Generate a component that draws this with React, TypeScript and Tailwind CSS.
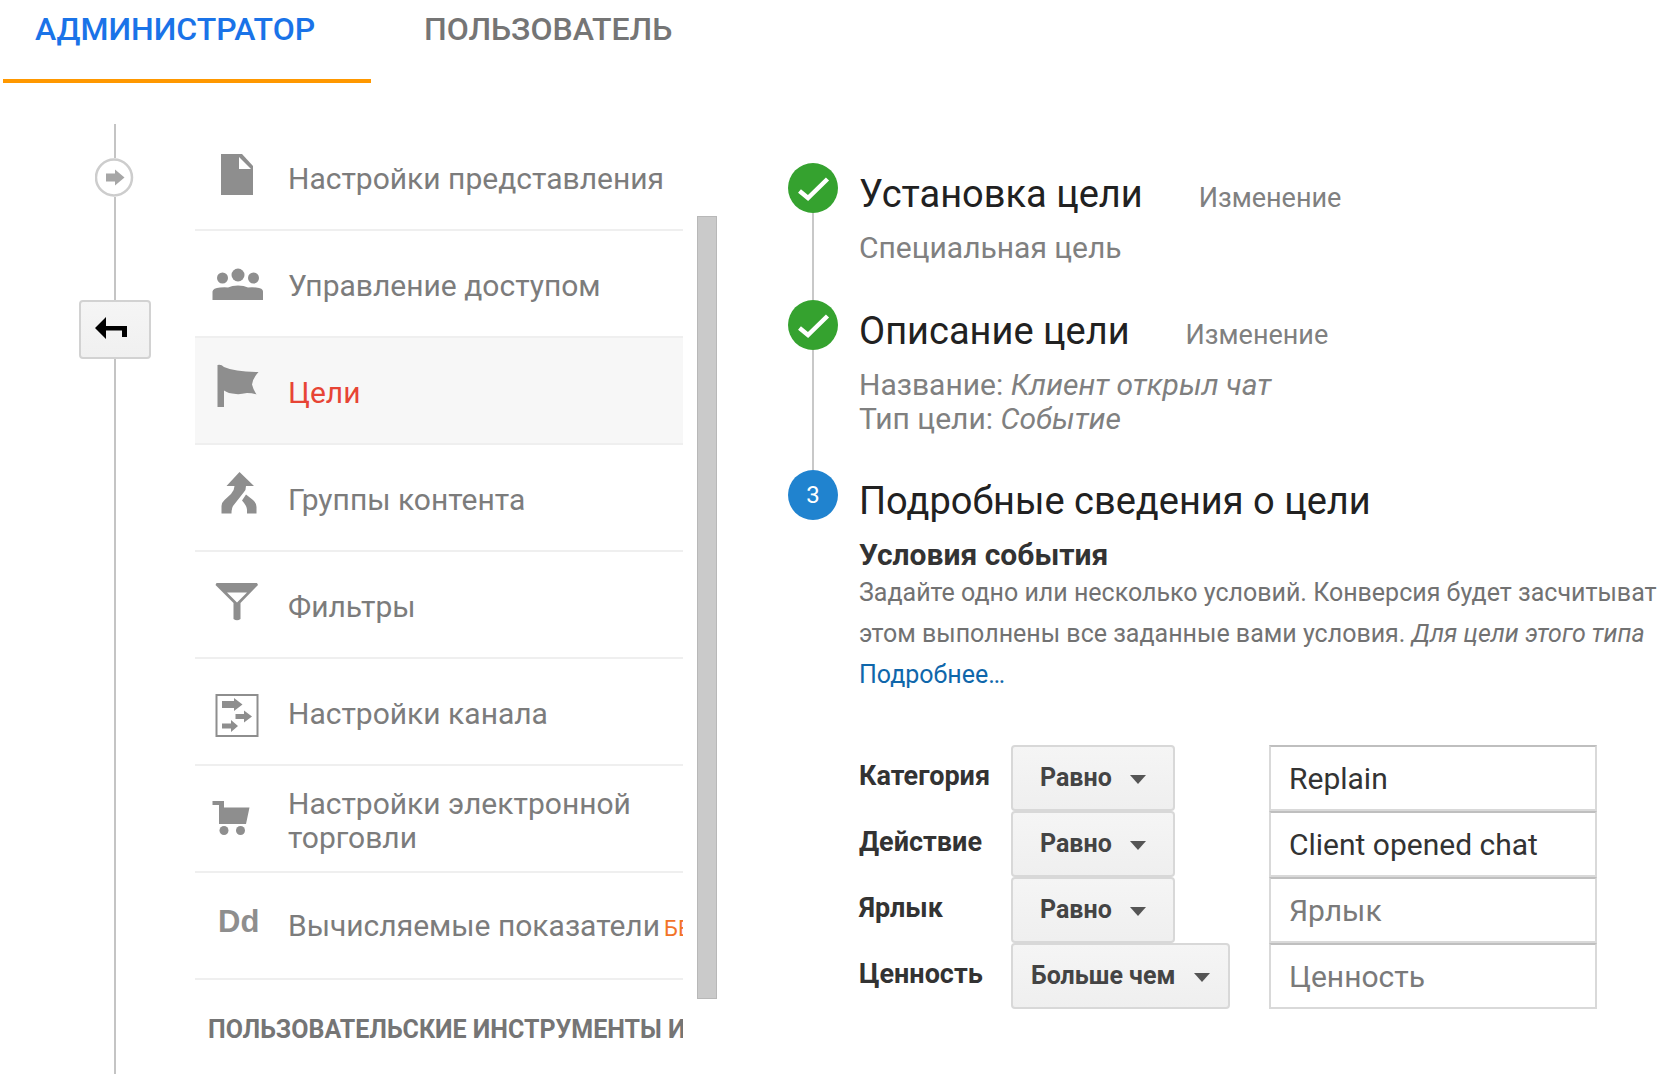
import { useState } from "react";
import type { ReactNode } from "react";
import clsx from "clsx";

type MenuItem = {
  label: string;
  icon: ReactNode;
  beta?: boolean;
};

const Icon = ({ children }: { children: ReactNode }) => (
  <svg width="56" height="56" viewBox="0 0 56 56" fill="#8e8e8e" className="shrink-0" aria-hidden="true">
    {children}
  </svg>
);

const menu: MenuItem[] = [
  {
    label: "Настройки представления",
    icon: (
      <Icon>
        <path d="M11 5H32L43 17V46H11Z" />
        <path d="M29 8V20H41Z" fill="#fff" />
      </Icon>
    ),
  },
  {
    label: "Управление доступом",
    icon: (
      <Icon>
        <circle cx="12.5" cy="22" r="5.5" />
        <circle cx="28" cy="19" r="6.5" />
        <circle cx="43.5" cy="22" r="5.5" />
        <path d="M2.5 44V35.5Q3 32 10 31.5Q15 31 18 31.5Q22 29.5 28 29.5Q34 29.5 38 31.5Q42 31 46 31.5Q53 32 53 35.5V44Z" />
      </Icon>
    ),
  },
  {
    label: "Цели",
    icon: (
      <Icon>
        <path d="M7.5 2Q11 1 14 4Q25 9 48.5 9Q43 15 42 21.5Q43 26 46.5 31.5Q42 30 37 30Q30 31.5 26 31Q18 30.5 14 27.5V44H7.5Z" />
      </Icon>
    ),
  },
  {
    label: "Группы контента",
    icon: (
      <Icon>
        <path d="M29.5 2L44 16H36Q36 20 34 22L23 36Q21.5 39 21.5 43.5H11.5V36Q12 32 14.500 30L21 24Q24.5 20 24.5 16H16.5Z" />
        <path d="M36 24.5L43 30Q46.5 33 46.5 37V43.5H37V40Q37 36 32 30.5Z" />
      </Icon>
    ),
  },
  {
    label: "Фильтры",
    icon: (
      <Icon>
        <path fillRule="evenodd" d="M6.500 6H47L48 8L30.5 26V42Q27 44.5 23.5 42V26L5.5 8ZM17 15.5L27 25.5L37 15.5Z" />
      </Icon>
    ),
  },
  {
    label: "Настройки канала",
    icon: (
      <Icon>
        <rect x="6.5" y="11" width="41" height="41" fill="none" stroke="#8e8e8e" strokeWidth="2" />
        <path d="M12 17H24V14L32.500 20.5L24 27V24H12Z" />
        <path d="M25.500 30H34V26.5L42 32.5L34 38.500V35H25.500Z" />
        <path d="M12 39.5H21V36L28 42L21 48V44.5H12Z" />
      </Icon>
    ),
  },
  {
    label: "Настройки электронной торговли",
    icon: (
      <Icon>
        <path d="M2.500 10H14V16.5H39.5L36 33H9V14H2.500Z" />
        <circle cx="14" cy="39.5" r="4.5" />
        <circle cx="30.5" cy="39.5" r="4.5" />
      </Icon>
    ),
  },
  {
    label: "Вычисляемые показатели",
    icon: (
      <span className="w-14 shrink-0 pb-2 pl-2 font-['Liberation_Sans',sans-serif] text-[31px] leading-[34px] font-bold text-[#8e8e8e]">
        Dd
      </span>
    ),
    beta: true,
  },
];

const conditions = [
  { id: "category", label: "Категория", match: "Равно", value: "Replain" },
  { id: "action", label: "Действие", match: "Равно", value: "Client opened chat" },
  { id: "label", label: "Ярлык", match: "Равно", value: "" },
  { id: "value", label: "Ценность", match: "Больше чем", value: "" },
];

const Check = () => (
  <svg width="50" height="50" viewBox="0 0 50 50" className="shrink-0" aria-hidden="true">
    <circle cx="25" cy="25" r="25" fill="#35a22f" />
    <path d="M11.5 28L20 35L39.5 16" fill="none" stroke="#fff" strokeWidth="4.5" />
  </svg>
);

type StepProps = {
  marker: ReactNode;
  title: string;
  editable?: boolean;
  last?: boolean;
  className?: string;
  children: ReactNode;
};

const Step = ({ marker, title, editable, last, className, children }: StepProps) => (
  <li className={clsx("flex gap-[21px]", className)}>
    <div className="flex w-[50px] shrink-0 flex-col items-center">
      {marker}
      {!last && <div className="w-[2px] grow bg-[#c8c8c8]" />}
    </div>
    <div className="min-w-0 grow pt-[7px]">
      <div className="flex items-baseline gap-14 leading-[48px]">
        <h2 className="text-[38px] text-[#212121]">{title}</h2>
        {editable && (
          <a href="#edit" className="text-[27px] text-[#808080]">
            Изменение
          </a>
        )}
      </div>
      <div className="mt-[9px]">{children}</div>
    </div>
  </li>
);

const Rail = () => (
  <div className="ml-[79px] flex w-[72px] shrink-0 flex-col items-center">
    <div className="h-[34px] w-[2px] bg-[#c4c4c4]" />
    <button type="button" aria-label="Вперёд" className="shrink-0">
      <svg width="40" height="39" viewBox="0 0 40 39" className="block" aria-hidden="true">
        <circle cx="19" cy="19.5" r="18" fill="#fff" stroke="#cdcdcd" strokeWidth="2.5" />
        <path d="M11 15.5H20V11.5L29.500 19.5L20 27.5V23.5H11Z" fill="#a6a6a6" />
      </svg>
    </button>
    <div className="h-[103px] w-[2px] bg-[#c4c4c4]" />
    <button
      type="button"
      aria-label="Назад"
      className="flex h-[59px] w-full shrink-0 items-center rounded-[4px] border-2 border-[#d2d2d2] bg-linear-to-b from-[#f5f5f5] to-[#f0f0f0] pl-[14px]"
    >
      <svg width="34" height="26" viewBox="0 0 34 26" aria-hidden="true">
        <path d="M0 11L11 0V9H32V20H27V13.5H11V22Z" fill="#000" />
      </svg>
    </button>
    <div className="w-[2px] grow bg-[#c4c4c4]" />
  </div>
);

export default function App() {
  const [active, setActive] = useState("Цели");

  return (
    <div className="flex min-h-screen flex-col overflow-hidden bg-white pb-[6px] font-[Roboto,sans-serif]">
      <nav className="flex pl-[3px] text-[32px] leading-[36px] font-medium">
        <a href="#admin" className="border-b-4 border-[#ff9800] pt-[11px] pr-14 pb-8 pl-8 text-[#1a73e8]">
          АДМИНИСТРАТОР
        </a>
        <a href="#user" className="pt-[11px] pl-[53px] text-[#757575]">
          ПОЛЬЗОВАТЕЛЬ
        </a>
      </nav>

      <div className="mt-[41px] flex grow">
        <Rail />

        <div className="ml-11 w-[488px] shrink-0 overflow-hidden">
          <ul>
            {menu.map((item) => (
              <li key={item.label}>
                <button
                  type="button"
                  onClick={() => setActive(item.label)}
                  className={clsx(
                    "flex h-[107px] w-full items-center gap-[22px] border-b-2 border-[#efefef] pl-[15px] text-left text-[30px] leading-[34px]",
                    item.label === active ? "bg-[#f7f7f7] text-[#e74435]" : "text-[#7c7c7c]"
                  )}
                >
                  {item.icon}
                  <span className={clsx("pt-1", item.beta && "whitespace-nowrap")}>
                    {item.label}
                    {item.beta && <span className="ml-1 text-[22px] text-[#f27328]">БЕТА</span>}
                  </span>
                </button>
              </li>
            ))}
          </ul>
          <h3 className="pt-8 pl-[13px] text-[25px] leading-[36px] font-bold whitespace-nowrap text-[#757575]">
            ПОЛЬЗОВАТЕЛЬСКИЕ ИНСТРУМЕНТЫ И ОБЪЕКТЫ
          </h3>
        </div>

        {/* scrollbar thumb */}
        <div className="mt-[92px] ml-[14px] h-[783px] w-5 shrink-0 border border-[#b8b8b8] bg-[#cacaca]" />

        <section className="mt-[39px] ml-[71px] min-w-0 grow">
          <ol>
            <Step marker={<Check />} title="Установка цели" editable className="min-h-[137px]">
              <p className="text-[30px] leading-[34px] text-[#808080]">Специальная цель</p>
            </Step>
            <Step marker={<Check />} title="Описание цели" editable className="min-h-[170px]">
              <p className="text-[30px] leading-[34px] text-[#808080]">
                Название: <em>Клиент открыл чат</em>
                <br />
                Тип цели: <em>Событие</em>
              </p>
            </Step>
            <Step
              marker={
                <span className="flex size-[50px] shrink-0 items-center justify-center rounded-full bg-[#2083cf] text-[24px] text-white">
                  3
                </span>
              }
              title="Подробные сведения о цели"
              last
            >
              <h3 className="pt-1 text-[30px] leading-[34px] font-bold text-[#333]">Условия события</h3>
              <p className="text-[25px] leading-[41px] whitespace-nowrap text-[#727272]">
                Задайте одно или несколько условий. Конверсия будет засчитыват
                <br />
                этом выполнены все заданные вами условия. <em>Для цели этого типа</em>
                <br />
                <a href="#more" className="text-[#0f67ab]">
                  Подробнее…
                </a>
              </p>

              <form className="mt-[50px]" onSubmit={(e) => e.preventDefault()}>
                {conditions.map((c) => (
                  <div key={c.id} className="flex h-[66px]">
                    <label htmlFor={c.id} className="w-[152px] shrink-0 text-[27px] leading-[62px] font-bold text-[#333]">
                      {c.label}
                    </label>
                    <div className="w-[258px] shrink-0">
                      <div className="relative inline-block">
                        <select
                          aria-label={`${c.label}: условие`}
                          defaultValue={c.match}
                          className={clsx(
                            "h-[66px] appearance-none rounded-[4px] border-2 border-[#d8d8d8] bg-linear-to-b from-[#f5f5f5] to-[#efefef] text-[25px] font-bold text-[#444]",
                            c.match === "Равно" ? "w-[164px] pl-[27px]" : "w-[219px] pl-[18px]"
                          )}
                        >
                          <option>{c.match}</option>
                        </select>
                        <svg
                          width="16"
                          height="9"
                          viewBox="0 0 16 9"
                          className={clsx(
                            "pointer-events-none absolute top-[30px]",
                            c.match === "Равно" ? "right-[29px]" : "right-5"
                          )}
                          aria-hidden="true"
                        >
                          <path d="M0 0H16L8 9Z" fill="#555" />
                        </svg>
                      </div>
                    </div>
                    <input
                      id={c.id}
                      type="text"
                      defaultValue={c.value}
                      placeholder={c.label}
                      className="h-[66px] w-[328px] border-2 border-[#d9d9d9] border-t-[#bfbfbf] bg-white pl-[18px] text-[30px] text-[#333] outline-none placeholder:text-[#7a7a7a]"
                    />
                  </div>
                ))}
              </form>
            </Step>
          </ol>
        </section>
      </div>
    </div>
  );
}
